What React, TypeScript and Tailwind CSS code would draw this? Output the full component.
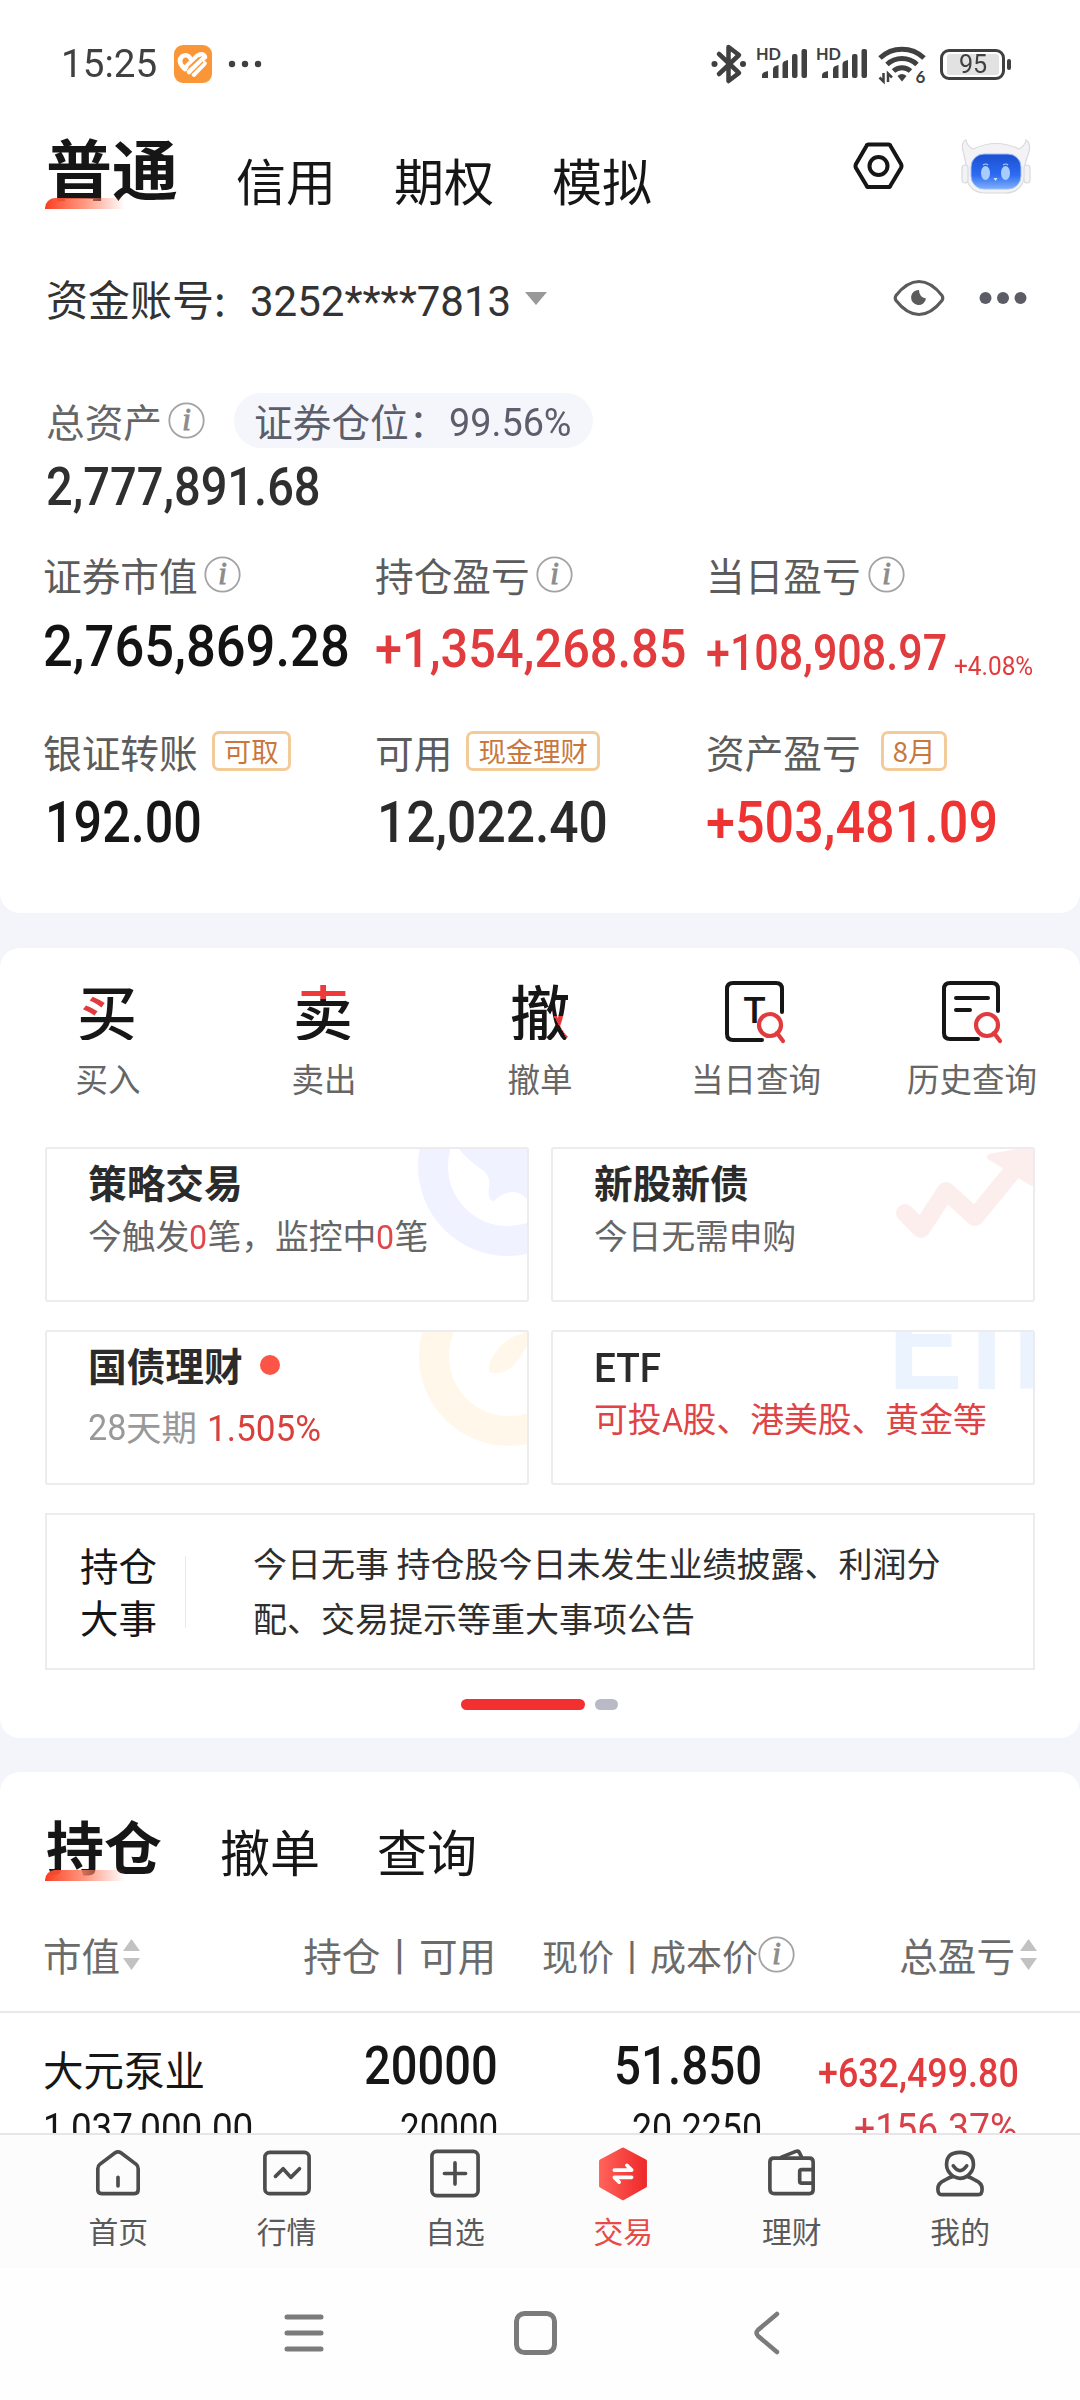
import { useLayoutEffect, useRef, useState } from 'react';
import type { ReactNode } from 'react';

type NumProps = {
  children: string;
  w: number;
  className?: string;
};

// Figures are set in a condensed face: squeeze the text to the given width.
function Num({ children, w, className = '' }: NumProps) {
  const ref = useRef<HTMLSpanElement>(null);
  const [scale, setScale] = useState(1);
  useLayoutEffect(() => {
    const el = ref.current;
    if (el) setScale(w / el.offsetWidth);
  }, [w, children]);
  return (
    <span
      className={`inline-block shrink-0 font-[Roboto,sans-serif] leading-none ${className}`}
      style={{ width: w }}
    >
      <span
        ref={ref}
        className="inline-block origin-left whitespace-nowrap"
        style={{ transform: `scaleX(${scale})` }}
      >
        {children}
      </span>
    </span>
  );
}

function Info() {
  return (
    <svg width="37" height="37" viewBox="0 0 37 37" className="shrink-0">
      <circle cx="18.5" cy="18.5" r="17.2" fill="none" stroke="#a3a3a3" strokeWidth="1.8" />
      <text
        x="18.5"
        y="28"
        textAnchor="middle"
        fontFamily="Liberation Serif, serif"
        fontStyle="italic"
        fontSize="31"
        fill="#8c8c8c"
        stroke="#8c8c8c"
        strokeWidth="1"
      >
        i
      </text>
    </svg>
  );
}

function Signal() {
  return (
    <svg width="52" height="36" viewBox="0 0 52 36" fill="#404040" className="overflow-visible">
      <text
        x="-2"
        y="14"
        fontFamily="Lato, sans-serif"
        fontWeight="bold"
        fontSize="17"
        textLength="25"
        lengthAdjust="spacingAndGlyphs"
      >
        HD
      </text>
      <path d="M4 32v-3q0-3 6-4v7zM15 32v-9q0-3 5.500-4v13zM24.500 32v-14q0-3 5.500-4v18z" />
      <rect x="34" y="8" width="5.500" height="24" rx="2" />
      <rect x="43.500" y="3" width="5.500" height="29" rx="2" />
    </svg>
  );
}

function StatusBar() {
  return (
    <header className="flex h-32 items-center pl-[61px] pr-[69px] text-[#404040]">
      <Num w={96} className="text-[39px]">
        15:25
      </Num>
      <svg width="38" height="38" viewBox="0 0 38 38" className="ml-[17px]">
        <rect width="38" height="38" rx="9" fill="#fb9638" />
        <g stroke="#fff" strokeWidth="4.600" strokeLinecap="round" fill="none">
          <path d="M17 14q-4-6-9-2.500-4 4 0 9.500l3 3" />
          <path d="M12 22 23 11q6-4 8 1" />
          <path d="M15 27 30 13" />
          <path d="M20 29.500 30.500 18.500" />
        </g>
        <path d="M14.500 22.500 25 12.500M18 28 29 17" stroke="#fb9638" strokeWidth="1.400" />
      </svg>
      <svg width="34" height="8" viewBox="0 0 34 8" className="ml-4" fill="#404040">
        <circle cx="4" cy="4" r="3.200" />
        <circle cx="17" cy="4" r="3.200" />
        <circle cx="30" cy="4" r="3.200" />
      </svg>
      <div className="ml-auto flex items-center">
        <svg width="38" height="42" viewBox="0 0 38 42" fill="none" stroke="#404040" strokeWidth="4.500" strokeLinejoin="round" strokeLinecap="round">
          <path d="M8 11 28 30 17.500 38V4L28 12 8 31" />
          <circle cx="3.500" cy="21" r="1.800" fill="#404040" strokeWidth="2.500" />
          <circle cx="32" cy="21" r="1.800" fill="#404040" strokeWidth="2.500" />
        </svg>
        <div className="ml-[9px] flex gap-2">
          <Signal />
          <Signal />
        </div>
        <svg width="50" height="40" viewBox="0 0 50 40" className="ml-[8px] overflow-visible" fill="none" stroke="#404040" strokeWidth="5">
          <path d="M2 14a32 32 0 0 1 44 0" />
          <path d="M9 20.500a22 22 0 0 1 30 0" />
          <path d="M15.500 27a12.500 12.500 0 0 1 17 0" />
          <path d="M19.500 32q4.500-4 9 0l-4.500 5.500z" fill="#404040" stroke="none" />
          <path d="M5.500 29v8.500l-4-4M10 38v-8.500l4 4" strokeWidth="2.500" />
          <text x="37.500" y="38.500" fontFamily="Lato, sans-serif" fontWeight="bold" fontSize="17" fill="#404040" stroke="none">
            6
          </text>
        </svg>
        <div className="ml-[12px] flex h-[31px] w-[65px] items-center justify-center rounded-[9px] border-[3px] border-[#404040]">
          <div className="flex h-[21px] w-[52px] items-center justify-center rounded-[3px] bg-[#e2e2e2]">
            <Num w={28} className="text-[26px]">
              95
            </Num>
          </div>
        </div>
        <div className="ml-[2px] h-[11px] w-1 rounded-sm bg-[#404040]" />
      </div>
    </header>
  );
}

function Robot() {
  return (
    <svg width="72" height="60" viewBox="0 0 72 60">
      <defs>
        <linearGradient id="face" x1="0" y1="0" x2="0" y2="1">
          <stop offset="0" stopColor="#1b4fd0" />
          <stop offset="0.600" stopColor="#2c6bf2" />
          <stop offset="1" stopColor="#7fb0fb" />
        </linearGradient>
      </defs>
      <g fill="#f3f3f6" stroke="#d9d9de" strokeWidth="1.200">
        <path d="M4 18Q0 5 6 3q1 6 7 9Q36 1 59 12q6-3 7-9 6 4 2 15-2 5-3 10v10q-3 18-20 18H26Q8 56 6 38V28Q5 22 4 18z" />
        <rect x="2" y="28" width="6" height="18" rx="3" />
        <rect x="64" y="28" width="6" height="18" rx="3" />
      </g>
      <rect x="11" y="17" width="50" height="35" rx="13" fill="url(#face)" stroke="#9dbdf5" />
      <ellipse cx="25.500" cy="36" rx="4.500" ry="7" fill="#a9cdfb" />
      <ellipse cx="45.500" cy="36" rx="4.500" ry="7" fill="#a9cdfb" />
      <path d="M23 28q3-2 5 0M43 28q3-2 5 0" fill="none" stroke="#a9cdfb" strokeWidth="1.200" />
      <path d="M33.500 41h4l-2 3z" fill="#d5e6ff" />
    </svg>
  );
}

function Underline({ className }: { className: string }) {
  return (
    <span
      className={`absolute -left-px h-[11px] w-20 rounded-tl-[10px] bg-linear-to-r from-[#fb3c1c] via-[#ff8064]/80 to-transparent ${className}`}
    />
  );
}

function TopTabs() {
  return (
    <nav className="flex h-[100px] items-start pl-[46px] text-[50px] leading-none text-[#161616]">
      <div className="relative mt-[5px] w-[132px] text-[66px] font-bold">
        普通
        <Underline className="bottom-[-10px]" />
      </div>
      <div className="ml-[58px] mt-[26px] flex gap-[58px]">
        <span>信用</span>
        <span>期权</span>
        <span>模拟</span>
      </div>
      <svg width="52" height="48" viewBox="0 0 52 48" className="ml-[200px] mt-[14px]" fill="none" stroke="#161616" strokeWidth="4">
        <path d="M16.500 2.500h20q1.500 0 2 1.500l10.500 18q1 2 0 4L38.500 43.500q-.5 1.500-2 1.500h-20q-1.500 0-2-1.500L4 26q-1-2 0-4L14.500 4q.5-1.500 2-1.500z" />
        <circle cx="26.500" cy="24" r="9" />
      </svg>
      <div className="ml-[56px] mt-[9px]">
        <Robot />
      </div>
    </nav>
  );
}

function Account() {
  return (
    <div className="flex h-36 items-center pl-[46px] text-[42px] leading-none text-[#333]">
      <span className="-mt-1 w-[204px] whitespace-nowrap">资金账号:</span>
      <Num w={261} className="mt-1 text-[42px]">
        3252****7813
      </Num>
      <svg width="22" height="13" viewBox="0 0 22 13" className="-mt-1 ml-[14px]" fill="#999">
        <path d="M0 0h22L11 13z" />
      </svg>
      <svg width="52" height="40" viewBox="0 0 52 40" className="-mt-1 ml-[346px]" fill="none" stroke="#5b5b5b" strokeWidth="3.200">
        <path d="M3 22.500Q1.500 20 3 17.500 14 3.500 26 3.500t23 14q1.500 2.500 0 5Q38 36.500 26 36.500T3 22.500z" />
        <path d="M26 12q0 7 7 8.500a7.500 7.500 0 1 1-7-8.500z" fill="#5b5b5b" stroke="none" />
      </svg>
      <svg width="48" height="14" viewBox="0 0 48 14" className="-mt-1 ml-[34px]" fill="#5c5c66">
        <circle cx="6.500" cy="7" r="6" />
        <circle cx="24" cy="7" r="6" />
        <circle cx="41.500" cy="7" r="6" />
      </svg>
    </div>
  );
}

function Label({ children }: { children: ReactNode }) {
  return (
    <div className="flex h-[52px] items-center text-[38.700px] leading-none text-[#5c5c5c]">{children}</div>
  );
}

function Tag({ children }: { children: ReactNode }) {
  return (
    <span className="flex h-10 items-center rounded-[7px] border-[3px] border-[#f3cb98] px-[9px] text-[27.400px] leading-none text-[#c9773f]">
      {children}
    </span>
  );
}

function Assets() {
  return (
    <>
      <div className="mt-[21px] flex h-[55px] items-center pl-[46px] text-[38.700px] leading-none text-[#666]">
        <span>总资产</span>
        <div className="ml-[6px]">
          <Info />
        </div>
        <div className="ml-[29px] flex h-full w-[359px] items-center rounded-full bg-[#f4f6fb] pl-5 text-[#5c5e6b]">
          <span className="w-[195px] whitespace-nowrap">证券仓位：</span>
          <Num w={123} className="mt-1.5 text-[39px]">
            99.56%
          </Num>
        </div>
      </div>
      <div className="flex h-[76px] items-center pl-[46px] text-[#2f2f2f]">
        <Num w={275} className="mt-0.5 text-[53px] font-medium">
          2,777,891.68
        </Num>
      </div>
      <div className="mt-6 grid grid-cols-[332px_331px_1fr] pb-12 pl-[43px]">
        <Label>
          证券市值
          <span className="ml-[6px]">
            <Info />
          </span>
        </Label>
        <Label>
          持仓盈亏
          <span className="ml-[6px]">
            <Info />
          </span>
        </Label>
        <Label>
          当日盈亏
          <span className="ml-[7px]">
            <Info />
          </span>
        </Label>
        <div className="flex h-[90px] items-center text-[#131313]">
          <Num w={307} className="mt-0.5 text-[58px] font-medium">
            2,765,869.28
          </Num>
        </div>
        <div className="flex h-[90px] items-center text-[#e23b3d]">
          <Num w={311} className="mt-2 text-[54px] font-medium">
            +1,354,268.85
          </Num>
        </div>
        <div className="flex h-[90px] items-center text-[#e23b3d]">
          <Num w={241} className="mt-4 text-[50px] font-medium">
            +108,908.97
          </Num>
          <Num w={79} className="ml-[7px] mt-[42px] text-[25px]">
            +4.08%
          </Num>
        </div>
        <div className="col-span-3 h-[35px]" />
        <Label>
          银证转账
          <span className="ml-[14px]">
            <Tag>可取</Tag>
          </span>
        </Label>
        <Label>
          可用
          <span className="ml-[14px]">
            <Tag>现金理财</Tag>
          </span>
        </Label>
        <Label>
          资产盈亏
          <span className="ml-5">
            <Tag>8月</Tag>
          </span>
        </Label>
        <div className="flex h-[88px] items-center pl-0.5 text-[#161616]">
          <Num w={157} className="mt-0.5 text-[58px] font-medium">
            192.00
          </Num>
        </div>
        <div className="flex h-[88px] items-center pl-0.5 text-[#2a2a2a]">
          <Num w={231} className="mt-0.5 text-[58px] font-medium">
            12,022.40
          </Num>
        </div>
        <div className="flex h-[88px] items-center text-[#ee3432]">
          <Num w={292} className="mt-0.5 text-[58px] font-medium">
            +503,481.09
          </Num>
        </div>
      </div>
    </>
  );
}

function Magnifier() {
  return (
    <g stroke="#e23b3d" strokeWidth="4.200" fill="none">
      <circle cx="51" cy="45" r="11" />
      <path d="m58 53 6 8" strokeLinecap="round" />
    </g>
  );
}

const actions = [
  {
    label: '买入',
    icon: (
      <span className="mr-0.5 bg-[#161616] bg-[linear-gradient(#e23b3d,#e23b3d)] bg-[length:24px_20px] bg-[position:5px_15px] bg-no-repeat bg-clip-text text-[60px] font-medium leading-[60px] text-transparent">
        买
      </span>
    ),
  },
  {
    label: '卖出',
    icon: (
      <span className="mr-0.5 bg-[linear-gradient(#ee3a3a_19px,#161616_19px)] bg-clip-text text-[60px] font-medium leading-[60px] text-transparent">
        卖
      </span>
    ),
  },
  {
    label: '撤单',
    icon: (
      <span className="bg-[#161616] bg-[linear-gradient(60deg,transparent_45%,#e23b3d_45%)] bg-[length:16px_24px] bg-[position:44px_36px] bg-no-repeat bg-clip-text text-[60px] font-medium leading-[60px] text-transparent">
        撤
      </span>
    ),
  },
  {
    label: '当日查询',
    icon: (
      <svg width="70" height="64" viewBox="0 0 70 64" fill="none" stroke="#161616" strokeWidth="4" strokeLinecap="round" className="mr-1 mt-1">
        <path d="M43 60H14q-6 0-6-6V9q0-6 6-6h43q6 0 6 6v23" />
        <text x="35.500" y="43" textAnchor="middle" fontFamily="Roboto, sans-serif" fontWeight="500" fontSize="37" fill="#161616" stroke="none">
          T
        </text>
        <Magnifier />
      </svg>
    ),
  },
  {
    label: '历史查询',
    icon: (
      <svg width="70" height="64" viewBox="0 0 70 64" fill="none" stroke="#161616" strokeWidth="4" strokeLinecap="round" className="mr-0.5 mt-1">
        <path d="M42 59H14q-6 0-6-6V9q0-6 6-6h42q6 0 6 6v22M20 18h32M20 30h14" />
        <Magnifier />
      </svg>
    ),
  },
];

function Actions() {
  return (
    <div className="grid h-[199px] grid-cols-5 pt-8">
      {actions.map((a) => (
        <div key={a.label} className="flex flex-col items-center">
          <div className="flex h-[60px] items-center">{a.icon}</div>
          <span className="mt-[21px] text-[32.5px] leading-[33px] text-[#666]">{a.label}</span>
        </div>
      ))}
    </div>
  );
}

function Card({ title, art, children }: { title: ReactNode; art: ReactNode; children: ReactNode }) {
  return (
    <div className="relative h-[155px] overflow-hidden rounded-[3px] border-2 border-[#ececee] pl-[41px]">
      <div className="absolute right-0 top-0">{art}</div>
      <div className="relative">
        <div className="mt-[13px] flex h-[39px] items-center text-[38.700px] font-bold leading-none text-[#2b2b2b]">
          {title}
        </div>
        {children}
      </div>
    </div>
  );
}

function Cards() {
  return (
    <div className="grid grid-cols-[484px_484px] gap-x-[22px] gap-y-7 pl-[45px]">
      <Card
        title="策略交易"
        art={
          <svg width="112" height="112" viewBox="0 0 112 112" fill="#f0f3ff">
            <circle cx="93" cy="17" r="75" fill="none" stroke="#f0f3ff" strokeWidth="30" />
            <path d="M44 0h68v50q-8-8-15-7-10 1-18 9-7 0-5-14 2-12-8-18-14-10-22-20z" />
          </svg>
        }
      >
        <div className="mt-[17px] flex h-[34px] items-center whitespace-nowrap text-[33.800px] leading-none text-[#666]">
          今触发
          <Num w={18} className="mt-1 text-[34px] text-[#e0474a]">
            0
          </Num>
          笔，监控中
          <Num w={18} className="mt-1 text-[34px] text-[#e0474a]">
            0
          </Num>
          笔
        </div>
      </Card>
      <Card
        title="新股新债"
        art={
          <svg width="140" height="96" viewBox="0 0 140 96" fill="none" stroke="#fdeeee" strokeLinejoin="round" strokeLinecap="round">
            <path d="m12 64 16 16 25-38 29 26 41-50" strokeWidth="18" />
            <path d="m97 8 42-8v34z" fill="#fdeeee" strokeWidth="6" />
          </svg>
        }
      >
        <div className="mt-[17px] flex h-[34px] items-center text-[33.700px] leading-none text-[#666]">今日无需申购</div>
      </Card>
      <Card
        title={
          <>
            国债理财
            <span className="ml-[17px] size-5 rounded-full bg-[#fc5548]" />
          </>
        }
        art={
          <svg width="112" height="118" viewBox="0 0 112 118">
            <circle cx="94" cy="24" r="75" fill="none" stroke="#fff8ea" strokeWidth="30" />
            <path d="M112 0Q94 4 84 16 72 30 74 40q12 4 24-6 8-8 14-20z" fill="#fff8ea" />
          </svg>
        }
      >
        <div className="mt-[25px] flex h-[34px] items-center text-[35.5px] leading-none text-[#999]">
          <Num w={38} className="mt-1 text-[36px]">
            28
          </Num>
          天期
          <Num w={114} className="ml-[10px] mt-1 text-[37px] text-[#d8403c]">
            1.505%
          </Num>
        </div>
      </Card>
      <Card
        title={
          <Num w={67} className="mt-2 text-[41px] font-medium">
            ETF
          </Num>
        }
        art={
          <div className="-mt-[55px] h-[128px] w-[148px] overflow-hidden whitespace-nowrap pl-px font-[Roboto] text-[134px] font-medium leading-[134px] tracking-[-17px] text-[#ebf3fe]">
            ETF
          </div>
        }
      >
        <div className="mt-[17px] flex h-[34px] items-center whitespace-nowrap text-[33.800px] leading-none text-[#e04346]">
          可投
          <Num w={21} className="mt-1 text-[34px]">
            A
          </Num>
          股、港美股、黄金等
        </div>
      </Card>
    </div>
  );
}

function Notice() {
  return (
    <div className="mx-[45px] mt-[28px] flex h-[157px] items-center border-2 border-[#ececee] pl-[33px]">
      <div className="-mt-1 w-[79px] text-[38.500px] leading-[52px] text-[#161616]">持仓大事</div>
      <div className="ml-[26px] h-[72px] w-px bg-[#e8e8ea]" />
      <p className="-mt-[3px] ml-[67px] w-[720px] text-[34px] leading-[55px] text-[#2e2e2e]">
        今日无事 持仓股今日未发生业绩披露、利润分
        <br />
        配、交易提示等重大事项公告
      </p>
    </div>
  );
}

function Sort() {
  return (
    <svg width="17" height="31" viewBox="0 0 17 31" fill="#c2c2c2">
      <path d="M8.500 0 17 12H0zM8.500 31 17 19H0z" />
    </svg>
  );
}

function Holdings() {
  return (
    <section className="h-[361px] overflow-hidden rounded-t-[20px] bg-white">
      <div className="flex h-[130px] items-start pl-[46px] text-[50px] leading-none text-[#161616]">
        <div className="relative mt-[44px] w-[117px] text-[58px] font-bold">
          持仓
          <Underline className="bottom-[-7px]" />
        </div>
        <span className="ml-[57px] mt-[53px]">撤单</span>
        <span className="ml-[57px] mt-[53px]">查询</span>
      </div>
      <div className="-mt-0.5 mb-0.5 flex h-[109px] items-center pl-[43px] pr-[43px] text-[38.6px] leading-none text-[#6b6b6b]">
        <div className="flex items-center gap-[3px]">
          市值
          <Sort />
        </div>
        <span className="ml-[163px]">持仓丨可用</span>
        <div className="ml-[46px] flex items-center text-[36px]">
          现价丨成本价
          <Info />
        </div>
        <div className="ml-auto flex items-center gap-[5px]">
          总盈亏
          <Sort />
        </div>
      </div>
      <div className="grid grid-cols-[323px_132px_264px_1fr] justify-items-end border-t-2 border-[#e9e9e9] pl-[43px] pr-[61px] pt-[28px] text-[#161616]">
        <div className="flex h-14 items-center justify-self-start text-[40.5px] leading-none">大元泵业</div>
        <div className="flex h-14 items-center">
          <Num w={134} className="-mt-1.5 text-[53px] font-medium">
            20000
          </Num>
        </div>
        <div className="flex h-14 items-center">
          <Num w={148} className="-mt-1.5 text-[53px] font-medium">
            51.850
          </Num>
        </div>
        <div className="flex h-14 items-center">
          <Num w={201} className="mt-[9px] text-[41px] font-medium text-[#e23b3d]">
            +632,499.80
          </Num>
        </div>
        <Num w={210} className="mt-[11px] justify-self-start text-[41px]">
          1,037,000.00
        </Num>
        <Num w={98} className="mt-[11px] text-[41px]">
          20000
        </Num>
        <Num w={130} className="mt-[11px] text-[41px]">
          20.2250
        </Num>
        <Num w={163} className="mr-0.5 mt-[11px] text-[41px] text-[#d8404a]">
          +156.37%
        </Num>
      </div>
    </section>
  );
}

const tabs = [
  {
    label: '首页',
    icon: <path d="M5 21q0-3 2-4.500L23 4.500q3-2 6 0l16 12q2 1.500 2 4.500v22q0 4-4 4H9q-4 0-4-4zM26 30v9" />,
  },
  {
    label: '行情',
    icon: (
      <>
        <rect x="3" y="4" width="46" height="43" rx="5" />
        <path d="m14 29 8-8 8 9 9-9" />
      </>
    ),
  },
  {
    label: '自选',
    icon: (
      <>
        <rect x="2" y="3" width="48" height="46" rx="5" />
        <path d="M26 15v22M15 26h22" />
      </>
    ),
  },
  {
    label: '交易',
    active: true,
    icon: (
      <>
        <defs>
          <linearGradient id="hex">
            <stop offset="0" stopColor="#ff6158" />
            <stop offset="1" stopColor="#ee2a2c" />
          </linearGradient>
        </defs>
        <path d="M26 1 49 13v26L26 52 3 39V13z" fill="url(#hex)" stroke="url(#hex)" />
        <path d="M17 22.500h18l-5-5M35 30H17l5 5" stroke="#fff" strokeWidth="3.800" />
      </>
    ),
  },
  {
    label: '理财',
    icon: (
      <>
        <path d="M7 10h37q4 0 4 4v29q0 4-4 4H8q-5 0-5-5V14q0-4 4-4zM48 22H36q-2 0-2 2v10q0 2 2 2h12" />
        <path d="m15 9 15-6q3-1 4 2l2 4" />
      </>
    ),
  },
  {
    label: '我的',
    icon: (
      <>
        <path d="M19 29Q12 24 12 17 12 4 26 4t14 13q0 7-7 12 4 1 9 4 7 3 7 9 0 6-4 6H7q-4 0-4-6 0-6 7-9 5-3 9-4 4 2 7 2M33 29q-3 2-7 2" />
        <path d="M19 18q7 10 14 0" />
      </>
    ),
  },
];

function TabBar() {
  return (
    <nav className="flex h-[135px] border-t-2 border-[#e6e6e6] bg-[#fcfcfc] pl-[34px]">
      {tabs.map((t) => (
        <div key={t.label} className="flex w-[168.400px] flex-col items-center pt-[13px]">
          <svg width="50" height="51" viewBox="0 0 52 52" fill="none" stroke="#4d4d4d" strokeWidth="3.800" strokeLinecap="round" strokeLinejoin="round" className="overflow-visible">
            {t.icon}
          </svg>
          <span className={`mt-[15px] text-[29.800px] leading-[32px] ${t.active ? 'text-[#ea4a45]' : 'text-[#5a5a5a]'}`}>
            {t.label}
          </span>
        </div>
      ))}
    </nav>
  );
}

function SystemNav() {
  return (
    <div className="h-[132px] bg-[#fefefe] pl-[283px] pt-[43px]">
      <svg width="500" height="44" viewBox="0 0 500 44" fill="none" stroke="#7b7b7b" strokeWidth="5" strokeLinecap="round">
        <path d="M4 6h34M4 22h34M4 38h34" />
        <rect x="233.500" y="2.500" width="38" height="39" rx="8" />
        <path d="M494 3 475 19q-3 3 0 6l19 16" strokeWidth="4.500" />
      </svg>
    </div>
  );
}

export default function App() {
  return (
    <div className="h-[2400px] w-[1080px] overflow-hidden bg-[#f3f5fa] font-['Noto_Sans_CJK_SC',sans-serif]">
      <section className="rounded-b-[20px] bg-white">
        <StatusBar />
        <TopTabs />
        <Account />
        <Assets />
      </section>
      <section className="mb-[34px] mt-[35px] rounded-[20px] bg-white pb-7">
        <Actions />
        <Cards />
        <Notice />
        <div className="mt-[29px] flex gap-[10px] pl-[461px]">
          <span className="h-[11px] w-[124px] rounded-full bg-[#f23031]" />
          <span className="h-[11px] w-[23px] rounded-full bg-[#b9bac6]" />
        </div>
      </section>
      <Holdings />
      <TabBar />
      <SystemNav />
    </div>
  );
}
